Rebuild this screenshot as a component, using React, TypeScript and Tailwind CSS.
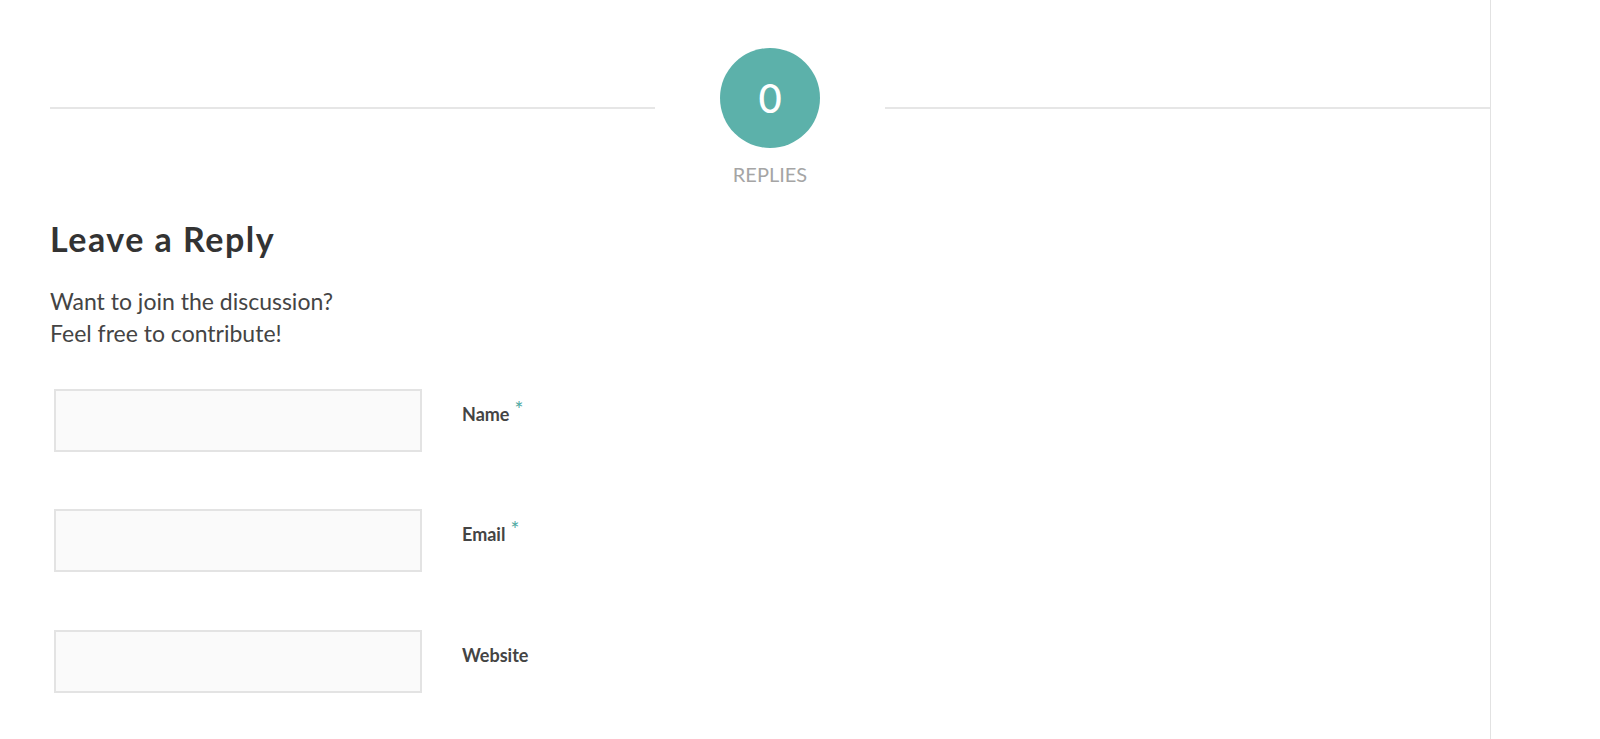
import React from "react";

function Field({ label, required, top }: { label: string; required?: boolean; top: string }) {
  return (
    <div className={`flex items-start ${top}`}>
      <input
        type="text"
        className="w-[368px] h-[63px] bg-[#fafafa] border-2 border-[#e3e3e3] outline-none ml-[4px]"
      />
      <label className="ml-[40px] mt-[13px] text-[18px] font-bold text-[#444] leading-[24px]">
        {label}
        {required && (
          <span className="text-[#4fa9a2] ml-[5px] relative top-[-4px] text-[21px] font-normal leading-none">*</span>
        )}
      </label>
    </div>
  );
}

export default function App() {
  return (
    <div
      className="w-full h-[739px] bg-white overflow-hidden flex"
      style={{ fontFamily: "Lato, 'Noto Sans', sans-serif" }}
    >
      <div className="w-[1491px] shrink-0 border-r border-[#e2e2e2] pl-[50px] pt-[48px]">
        <div className="flex items-start">
          <div className="flex-1 h-[2px] bg-[#e6e6e6] mt-[59px]" />
          <div className="w-[230px] flex flex-col items-center">
            <div className="w-[100px] h-[100px] rounded-full bg-[#5cb1aa] flex items-center justify-center text-white text-[40px] font-medium leading-none">
              0
            </div>
            <div className="mt-[14px] text-[20px] leading-[24px] text-[#a5a5a5] uppercase">Replies</div>
          </div>
          <div className="flex-1 h-[2px] bg-[#e6e6e6] mt-[59px]" />
        </div>
        <h3 className="mt-[33px] text-[34px] leading-[40px] font-bold text-[#333] tracking-[1.5px]">Leave a Reply</h3>
        <p className="mt-[26px] text-[23px] leading-[32px] text-[#444]">
          Want to join the discussion?
          <br />
          Feel free to contribute!
        </p>
        <Field label="Name" required top="mt-[40px]" />
        <Field label="Email" required top="mt-[57px]" />
        <Field label="Website" top="mt-[58px]" />
      </div>
      <div className="flex-1" />
    </div>
  );
}
